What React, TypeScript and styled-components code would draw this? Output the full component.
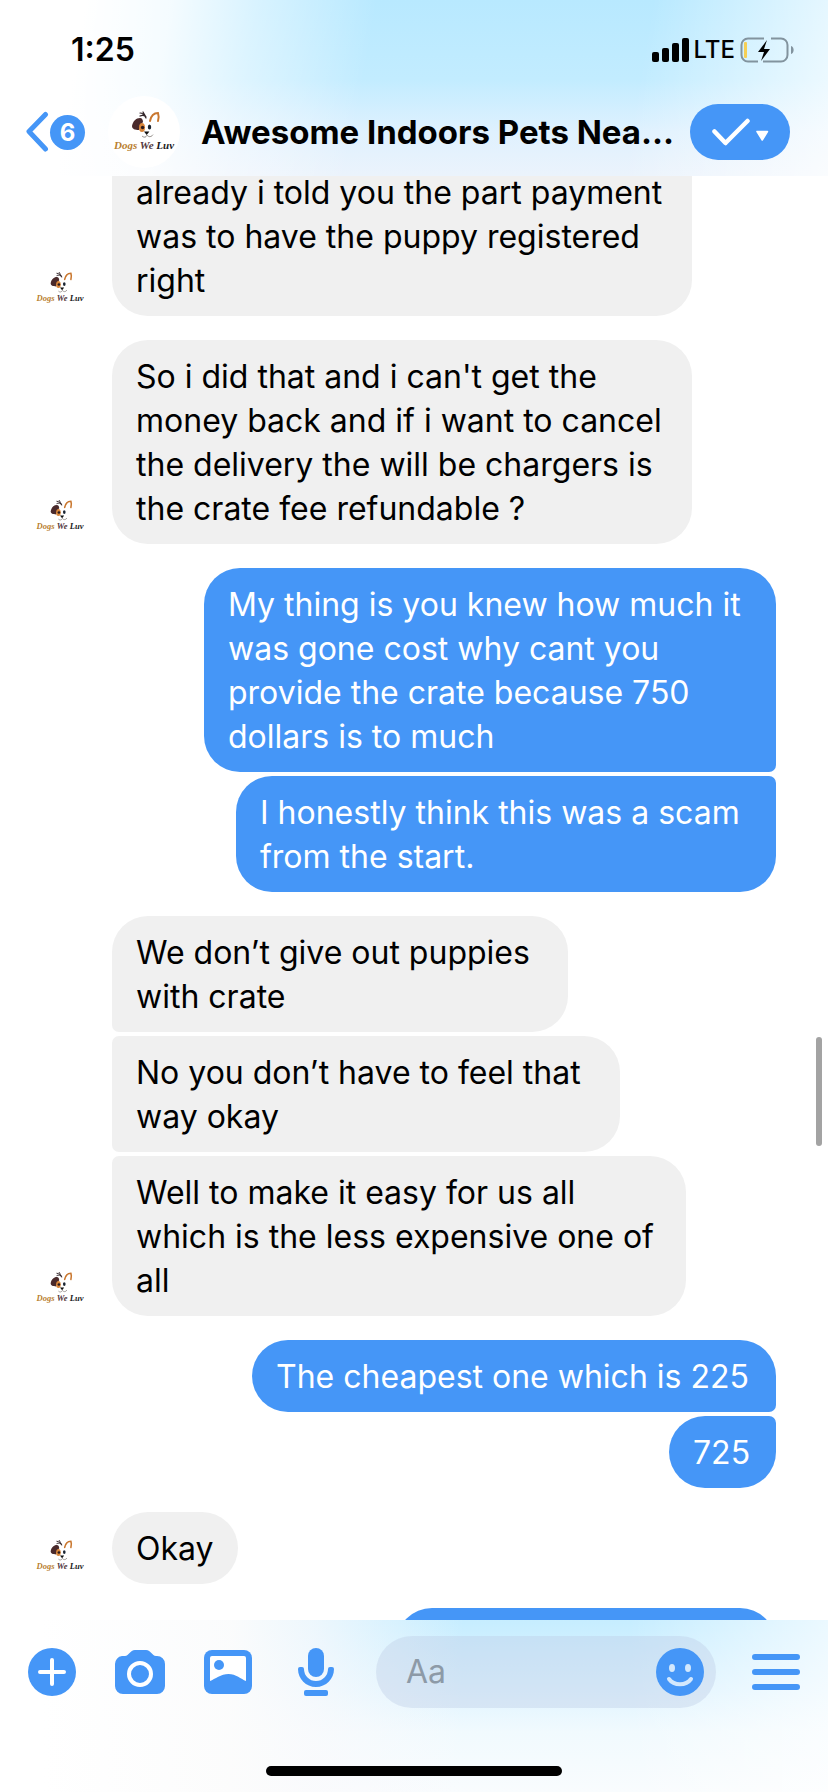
import React from 'react';
import styled, { createGlobalStyle } from 'styled-components';

const BLUE = '#4596f7';
const GREY = '#f0f0f0';

const GlobalStyle = createGlobalStyle`
  *, *::before, *::after { box-sizing: border-box; }
  body {
    margin: 0;
    background: #fff;
    color: #000;
    font-family: Inter, 'Liberation Sans', sans-serif;
  }
  button { border: 0; padding: 0; background: none; color: inherit; font: inherit; cursor: pointer; }
  svg { display: block; }
`;

const Screen = styled.div`
  display: flex;
  flex-direction: column;
  height: 100vh;
  overflow: hidden;
`;

const Header = styled.header`
  flex: none;
  background:
    linear-gradient(100deg, #fff 10%, rgba(255, 255, 255, 0.85) 20%, rgba(255, 255, 255, 0.45) 30%, rgba(255, 255, 255, 0) 44%, rgba(255, 255, 255, 0) 76%, rgba(255, 255, 255, 0.75) 100%),
    linear-gradient(to bottom, #b8e9ff 0%, #c2ecff 45%, #dff1fe 75%, #ebf3fc 100%);
`;

const StatusBar = styled.div`
  display: flex;
  align-items: center;
  justify-content: space-between;
  height: 88px;
  padding: 12px 34px 0 71px;
`;

const Clock = styled.time`
  font-size: 32px;
  line-height: 40px;
  font-weight: 600;
`;

const StatusIcons = styled.div`
  display: flex;
  align-items: center;
  gap: 5px;
`;

const Network = styled.span`
  font-size: 24px;
  line-height: 32px;
  font-weight: 500;
`;

const NavBar = styled.nav`
  display: flex;
  align-items: center;
  height: 88px;
  padding: 0 38px 0 25px;
`;

const BackButton = styled.button`
  display: flex;
  align-items: center;
  gap: 1px;
  margin-right: 23px;
`;

const UnreadBadge = styled.span`
  width: 35px;
  height: 35px;
  border-radius: 50%;
  background: ${BLUE};
  color: #fff;
  font-size: 24px;
  line-height: 36px;
  font-weight: 700;
  text-align: center;
`;

const AvatarCircle = styled.span<{ $size: number }>`
  flex: none;
  display: block;
  width: ${(p) => p.$size}px;
  height: ${(p) => p.$size}px;
  border-radius: 50%;
  background: #fff;
  overflow: hidden;
`;

const Title = styled.h1`
  flex: 1;
  min-width: 0;
  margin: 0 12px 0 21px;
  font-size: 33px;
  line-height: 40px;
  font-weight: 700;
  white-space: nowrap;
`;

const StatusButton = styled.button`
  flex: none;
  display: flex;
  align-items: center;
  justify-content: center;
  width: 100px;
  height: 56px;
  border-radius: 28px;
  background: ${BLUE};
`;

const Viewport = styled.main`
  position: relative;
  flex: 1;
  min-height: 0;
  overflow: hidden;
`;

const Thread = styled.div`
  display: flex;
  flex-direction: column;
  gap: 24px;
  margin-top: -20px;
  padding: 0 52px 0 32px;
`;

const Group = styled.section<{ $own?: boolean }>`
  display: flex;
  align-items: flex-end;
  justify-content: ${(p) => (p.$own ? 'flex-end' : 'flex-start')};
  gap: 24px;
`;

const Stack = styled.div<{ $own?: boolean }>`
  display: flex;
  flex-direction: column;
  align-items: ${(p) => (p.$own ? 'flex-end' : 'flex-start')};
  gap: 4px;
`;

type BubbleProps = { $own?: boolean; $joinTop?: boolean; $joinBottom?: boolean; $cut?: boolean; $width: number };

const Bubble = styled.p<BubbleProps>`
  width: ${(p) => p.$width}px;
  min-height: 72px;
  margin: 0;
  padding: 15px 0 13px 24px;
  font-size: 32px;
  line-height: 44px;
  white-space: pre;
  color: ${(p) => (p.$own ? '#fff' : '#000')};
  background: ${(p) => (p.$own ? BLUE : GREY)};
  border-radius: 36px;
  ${(p) => p.$cut && 'border-top-left-radius: 0; border-top-right-radius: 0;'}
  ${(p) => p.$joinTop && (p.$own ? 'border-top-right-radius: 7px;' : 'border-top-left-radius: 7px;')}
  ${(p) => p.$joinBottom && (p.$own ? 'border-bottom-right-radius: 7px;' : 'border-bottom-left-radius: 7px;')}
`;

const ScrollThumb = styled.div`
  position: absolute;
  top: 861px;
  right: 6px;
  width: 6px;
  height: 109px;
  border-radius: 3px;
  background: #a3a3a3;
`;

const Footer = styled.footer`
  flex: none;
  background:
    linear-gradient(to right, #fff 5%, rgba(252, 252, 252, 0.97) 28%, rgba(250, 250, 252, 0.75) 38%, rgba(255, 255, 255, 0) 56%, rgba(255, 255, 255, 0) 76%, rgba(255, 255, 255, 0.65) 100%),
    linear-gradient(to bottom, #c6edff 0%, #dff4ff 40%, #f1fafe 65%, #f9fcfe 100%);
`;

const Composer = styled.form`
  display: flex;
  align-items: center;
  padding: 16px 28px 0;
`;

const Tools = styled.div`
  flex: none;
  display: flex;
  align-items: center;
  gap: 38px;
  margin-right: 38px;
`;

const IconButton = styled.button`
  flex: none;
  display: block;
`;

const Field = styled.div`
  flex: 1;
  min-width: 0;
  display: flex;
  align-items: center;
  height: 72px;
  margin-right: 36px;
  padding: 0 12px 0 30px;
  border-radius: 36px;
  background: rgba(190, 205, 230, 0.4);
`;

const TextBox = styled.input`
  flex: 1;
  min-width: 0;
  padding: 0;
  border: 0;
  outline: 0;
  background: none;
  font-family: inherit;
  font-size: 32px;
  line-height: 44px;
  color: #000;
  &::placeholder { color: #8d9aa7; opacity: 1; }
`;

const HomeIndicator = styled.div`
  width: 296px;
  height: 10px;
  margin: 58px auto 16px;
  border-radius: 5px;
  background: #000;
`;

function Avatar({ size }: { size: number }) {
  return (
    <AvatarCircle $size={size}>
      <svg width={size} height={size} viewBox="0 0 72 72" role="img" aria-label="Dogs We Luv">
        <path d="M24 30c1-5 4-8 8-8 2 0 3 2 3 4-2 2-3 5-4 8-4 0-7-1-7-4z" fill="#4a2a2c" />
        <path d="M32 17c3 0 5 3 6 5M35 16c1 2 2 3 3 5M32 20c2-1 4-1 6 1" fill="none" stroke="#33262a" strokeWidth="1.200" strokeLinecap="round" />
        <path d="M42 25c1-5 4-8 8-8 1 3 1 5 0 8" fill="none" stroke="#c9772f" strokeWidth="2" strokeLinecap="round" />
        <ellipse cx="34" cy="31.5" rx="3" ry="4.500" fill="#d9863b" />
        <circle cx="34.6" cy="31.5" r="1.700" fill="#2c1a1c" />
        <ellipse cx="41.5" cy="31" rx="1.7" ry="2.5" fill="#1c2633" />
        <path d="M36 35.5h5.400l-2.700 3.500z" fill="#111" />
        <path d="M34 40c2 1.800 4 1.400 5-.8 2 2 4 2 6-.5" fill="none" stroke="#8c8580" strokeWidth="1" />
        <text x="36" y="53" textAnchor="middle" fontFamily="'Liberation Serif', serif" fontStyle="italic" fontWeight="700" fontSize="11" fill="#b9802f">
          Dogs <tspan fill="#54383d">We</tspan> <tspan fill="#1a1a1c">Luv</tspan>
        </text>
      </svg>
    </AvatarCircle>
  );
}

function SignalIcon() {
  return (
    <svg width="37" height="24" viewBox="0 0 37 24" aria-hidden="true">
      <rect x="0" y="14" width="7" height="10" rx="2" />
      <rect x="10" y="10" width="7" height="14" rx="2" />
      <rect x="20" y="5" width="7" height="19" rx="2" />
      <rect x="30" y="0" width="7" height="24" rx="2" />
    </svg>
  );
}

function BatteryIcon() {
  return (
    <svg width="54" height="26" viewBox="0 0 54 26" aria-hidden="true">
      <path d="M24 1.500H8a6.500 6.500 0 0 0-6.500 6.500v10a6.500 6.500 0 0 0 6.500 6.500h10M31 1.500h10a6.500 6.500 0 0 1 6.500 6.500v10a6.500 6.500 0 0 1-6.500 6.500H23" fill="none" stroke="#82939e" strokeWidth="2" />
      <path d="M51 9c3.500 1 3.500 7 0 8z" fill="#82939e" />
      <rect x="4" y="5" width="3" height="16" rx="1" fill="#f6cf55" />
      <path d="M27 3l-9 12h6l-3 9 9-12h-6z" fill="#000" />
    </svg>
  );
}

type Message = { text: string; width: number; cut?: boolean };
type MessageGroup = { own?: boolean; messages: Message[] };

const groups: MessageGroup[] = [
  { messages: [{ text: 'already i told you the part payment\nwas to have the puppy registered\nright', width: 580, cut: true }] },
  { messages: [{ text: "So i did that and i can't get the\nmoney back and if i want to cancel\nthe delivery the will be chargers is\nthe crate fee refundable ?", width: 580 }] },
  {
    own: true,
    messages: [
      { text: 'My thing is you knew how much it\nwas gone cost why cant you\nprovide the crate because 750\ndollars is to much', width: 572 },
      { text: 'I honestly think this was a scam\nfrom the start.', width: 540 },
    ],
  },
  {
    messages: [
      { text: 'We don’t give out puppies\nwith crate', width: 456 },
      { text: 'No you don’t have to feel that\nway okay', width: 508 },
      { text: 'Well to make it easy for us all\nwhich is the less expensive one of\nall', width: 574 },
    ],
  },
  { own: true, messages: [{ text: 'The cheapest one which is 225', width: 524 }, { text: '725', width: 107 }] },
  { messages: [{ text: 'Okay', width: 126 }] },
  { own: true, messages: [{ text: '', width: 380 }] },
];

export default function App() {
  return (
    <>
      <GlobalStyle />
      <Screen>
        <Header>
          <StatusBar>
            <Clock>1:25</Clock>
            <StatusIcons>
              <SignalIcon />
              <Network>LTE</Network>
              <BatteryIcon />
            </StatusIcons>
          </StatusBar>
          <NavBar>
            <BackButton type="button" aria-label="Back, 6 unread">
              <svg width="24" height="42" viewBox="0 0 24 42" fill="none" stroke={BLUE} strokeWidth="5" strokeLinecap="round" strokeLinejoin="round">
                <path d="M20.500 3.500L4 20.500l16.500 17.500" />
              </svg>
              <UnreadBadge>6</UnreadBadge>
            </BackButton>
            <Avatar size={72} />
            <Title>Awesome Indoors Pets Nea...</Title>
            <StatusButton type="button" aria-label="Mark as done">
              <svg width="58" height="28" viewBox="0 0 58 28" aria-hidden="true">
                <path d="M3.500 13.500l11 11.500L36.500 3" fill="none" stroke="#fff" strokeWidth="4.500" strokeLinecap="round" strokeLinejoin="round" />
                <path d="M46 13.500h10.500l-5.250 8.500z" fill="#fff" stroke="#fff" strokeWidth="1.500" strokeLinejoin="round" />
              </svg>
            </StatusButton>
          </NavBar>
        </Header>

        <Viewport>
          <Thread>
            {groups.map((group, g) => (
              <Group key={g} $own={group.own}>
                {!group.own && <Avatar size={56} />}
                <Stack $own={group.own}>
                  {group.messages.map((message, m) => (
                    <Bubble
                      key={m}
                      $own={group.own}
                      $cut={message.cut}
                      $joinTop={m > 0}
                      $joinBottom={m < group.messages.length - 1}
                      $width={message.width}
                    >
                      {message.text}
                    </Bubble>
                  ))}
                </Stack>
              </Group>
            ))}
          </Thread>
          <ScrollThumb />
        </Viewport>

        <Footer>
          <Composer onSubmit={(e) => e.preventDefault()}>
            <Tools>
              <IconButton type="button" aria-label="More actions">
                <svg width="48" height="48" viewBox="0 0 48 48">
                  <circle cx="24" cy="24" r="24" fill={BLUE} />
                  <path d="M24 12v24M12 24h24" stroke="#fff" strokeWidth="4" strokeLinecap="round" />
                </svg>
              </IconButton>
              <IconButton type="button" aria-label="Camera">
                <svg width="52" height="48" viewBox="0 0 52 48">
                  <path d="M8 8h3c4 0 5-6 10-6h11c5 0 6 6 10 6h1a8 8 0 0 1 8 8v22a8 8 0 0 1-8 8H9a8 8 0 0 1-8-8V16a8 8 0 0 1 7-8z" fill={BLUE} />
                  <circle cx="26" cy="26" r="11" fill="none" stroke="#fff" strokeWidth="4" />
                </svg>
              </IconButton>
              <IconButton type="button" aria-label="Photos">
                <svg width="48" height="48" viewBox="0 0 48 48">
                  <rect x="0" y="2" width="48" height="44" rx="8" fill={BLUE} />
                  <path d="M8 8h32a2 2 0 0 1 2 2v23c-5-2-10-7-17.500-7S11 31 6 33V10a2 2 0 0 1 2-2z" fill="#fff" />
                  <circle cx="15" cy="17" r="5" fill={BLUE} />
                </svg>
              </IconButton>
              <IconButton type="button" aria-label="Voice message">
                <svg width="48" height="48" viewBox="0 0 48 48" fill={BLUE}>
                  <rect x="18" y="0" width="16" height="29" rx="8" />
                  <path d="M10 19h2q2 0 2 2a12 12 0 0 0 24 0q0-2 2-2h2q2 0 2 2c0 10-8 18-18 18S8 31 8 21q0-2 2-2z" />
                  <rect x="14" y="42" width="24" height="6" rx="2" />
                </svg>
              </IconButton>
            </Tools>
            <Field>
              <TextBox type="text" placeholder="Aa" aria-label="Message" />
              <IconButton type="button" aria-label="Emoji">
                <svg width="48" height="48" viewBox="0 0 48 48">
                  <circle cx="24" cy="24" r="24" fill={BLUE} />
                  <ellipse cx="16" cy="20" rx="3" ry="4" fill="#d3e8fd" />
                  <ellipse cx="32" cy="20" rx="3" ry="4" fill="#d3e8fd" />
                  <path d="M13 31c5 7 17 7 22 0" fill="none" stroke="#d3e8fd" strokeWidth="4" strokeLinecap="round" />
                </svg>
              </IconButton>
            </Field>
            <IconButton type="button" aria-label="Menu">
              <svg width="48" height="48" viewBox="0 0 48 48" stroke={BLUE} strokeWidth="6" strokeLinecap="round">
                <path d="M3 9h42M3 24h42M3 39h42" />
              </svg>
            </IconButton>
          </Composer>
          <HomeIndicator />
        </Footer>
      </Screen>
    </>
  );
}
